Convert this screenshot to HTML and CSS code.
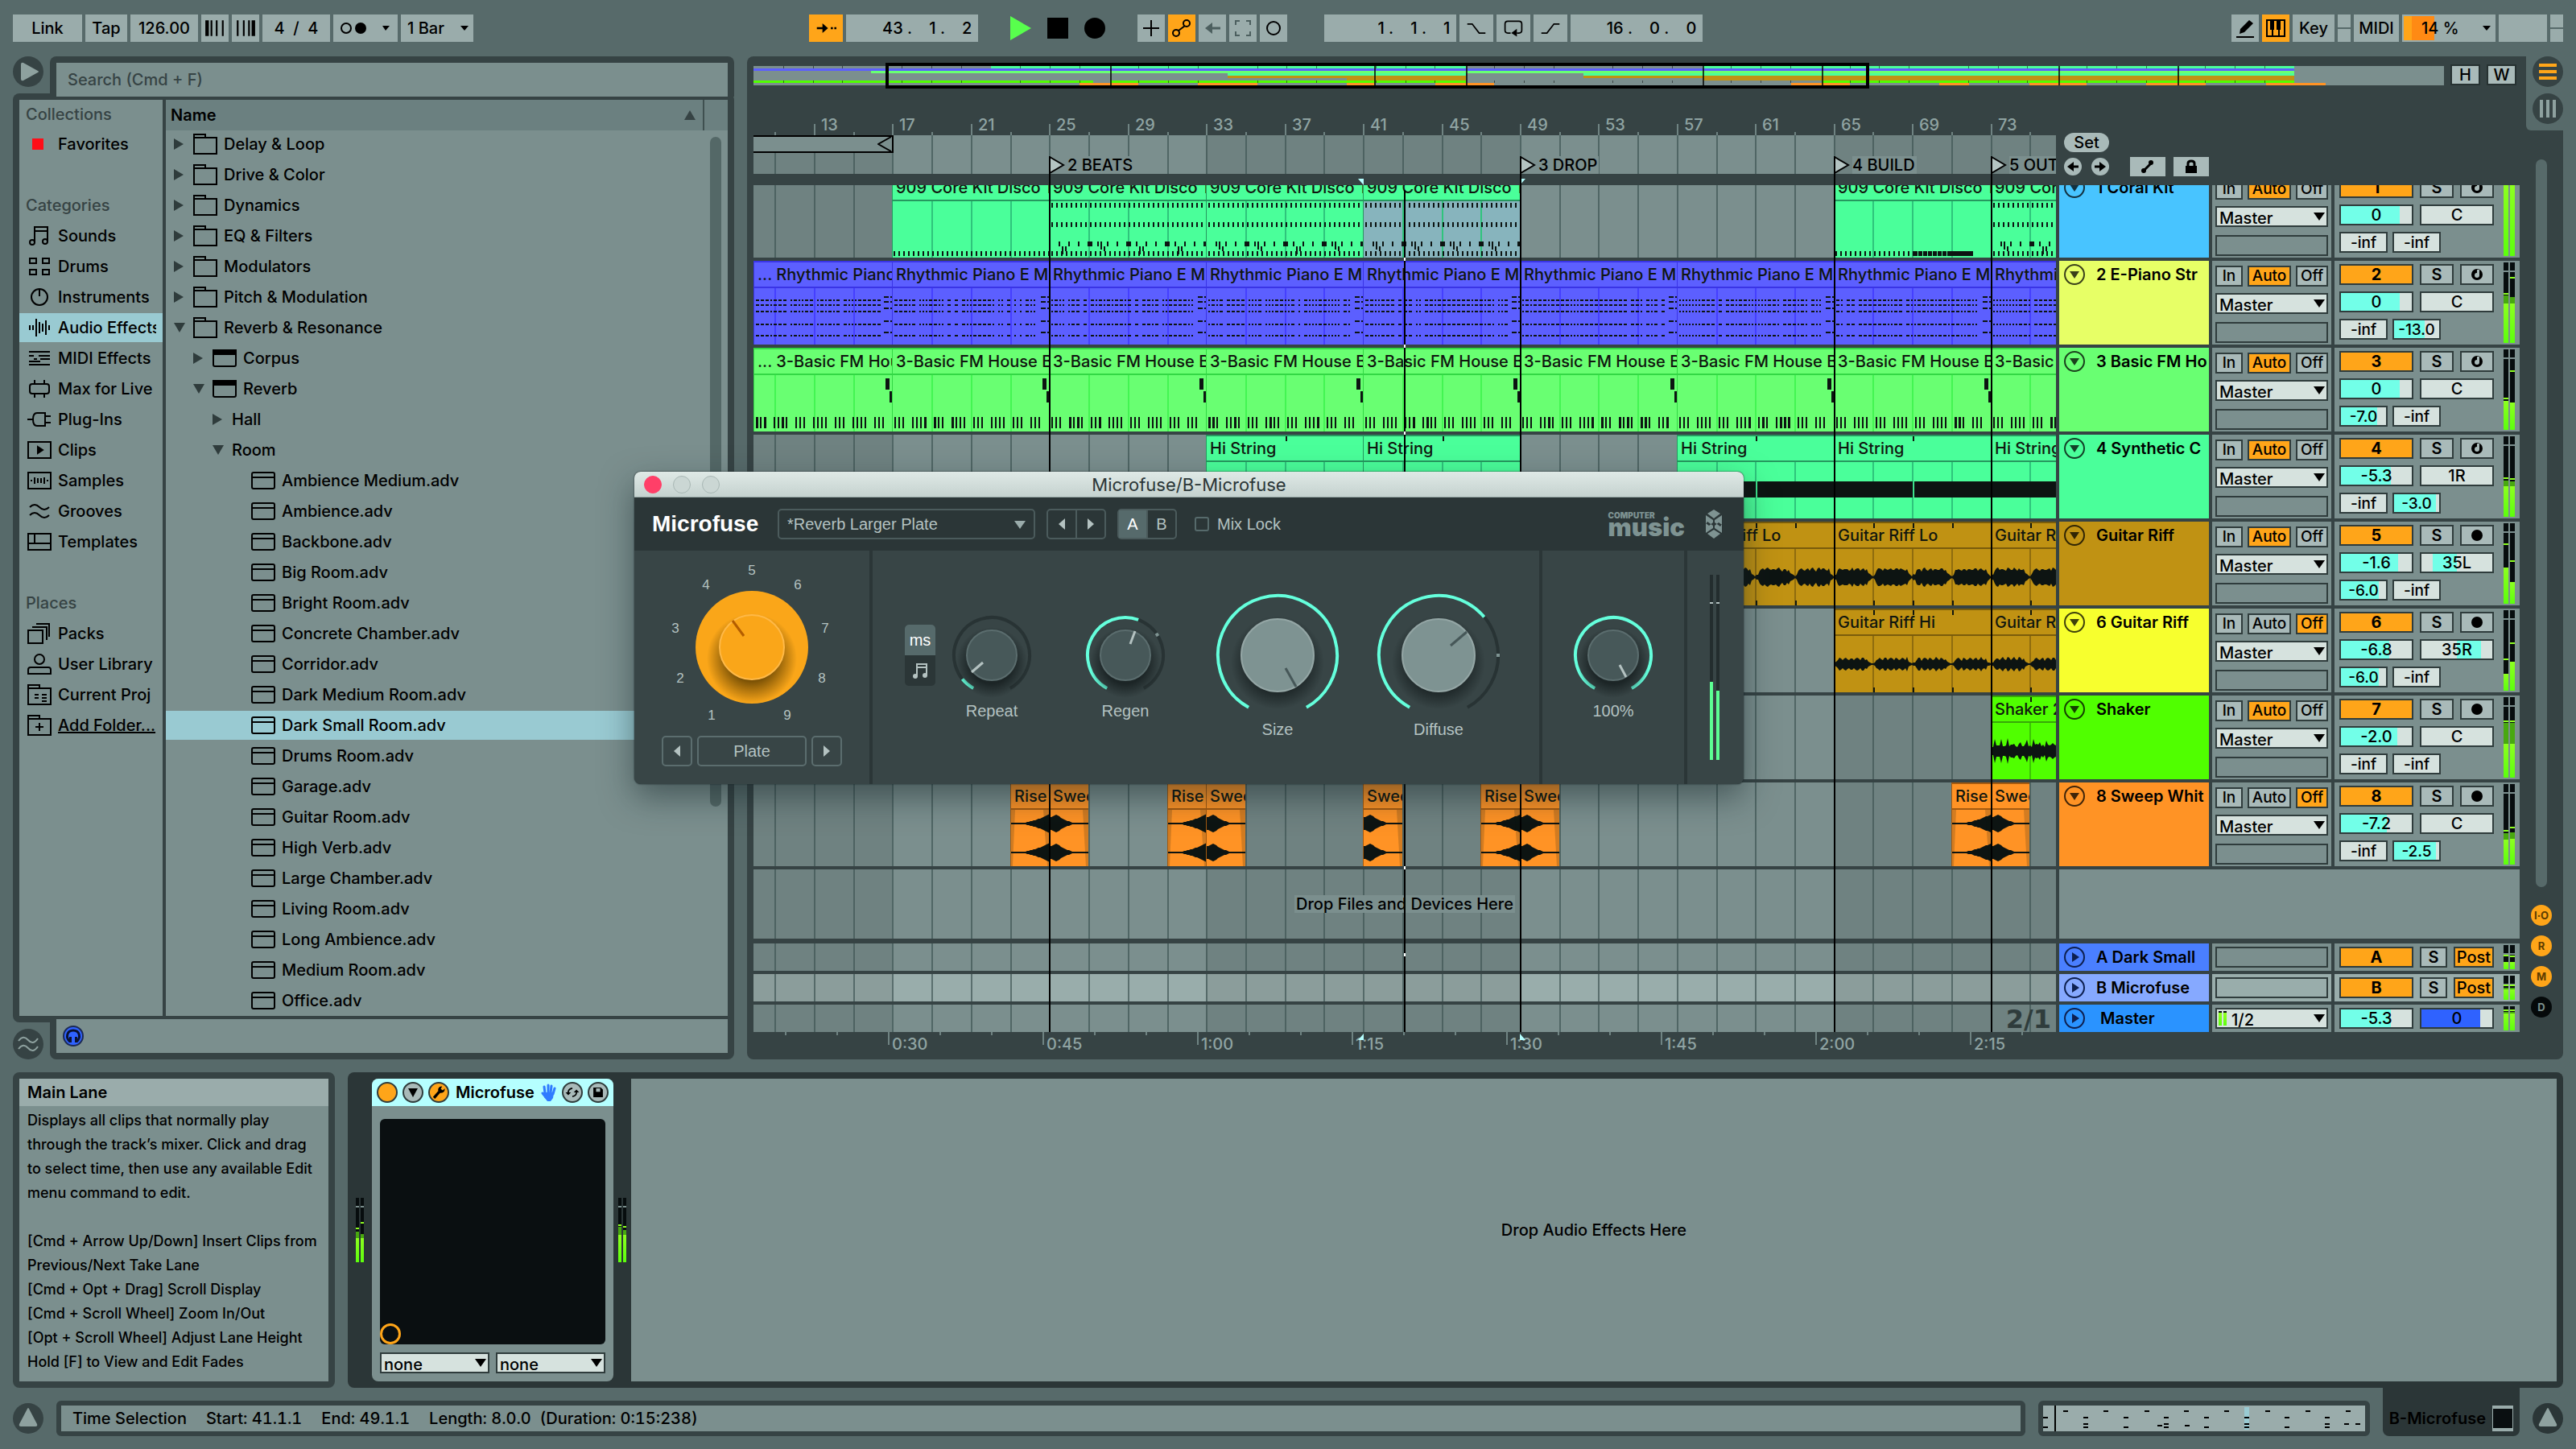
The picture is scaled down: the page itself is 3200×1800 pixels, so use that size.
FILE: index.html
```html
<!DOCTYPE html>
<html lang="en">
<head>
    <meta charset="UTF-8">
    <meta name="viewport" content="width=device-width, initial-scale=1.0">
    <title>Arrangement</title>
    <link rel="stylesheet" href="styles.css">
</head>
<body>
    <!-- shared icons -->
    <svg class="defs" aria-hidden="true">
        <symbol id="i-folder" viewBox="0 0 30 28"><path d="M1 26V2h14v4M1 6h28v20H1z"/></symbol>
        <symbol id="i-device" viewBox="0 0 30 28"><rect x="1" y="4" width="28" height="20" rx="2"/><path class="solid" d="M1 4h28v5H1z"/></symbol>
        <symbol id="i-preset" viewBox="0 0 30 28"><rect x="1" y="4" width="28" height="20" rx="2"/><path d="M1 10h28"/></symbol>
        <symbol id="i-sounds" viewBox="0 0 30 28"><path d="M9 22V3h16v18M9 8h16"/><circle cx="6" cy="22" r="3"/><circle cx="22" cy="21" r="3"/></symbol>
        <symbol id="i-drums" viewBox="0 0 30 28"><path d="M3 4h8v6H3zM19 4h8v6h-8zM3 18h8v6H3zM19 18h8v6h-8z"/></symbol>
        <symbol id="i-instruments" viewBox="0 0 30 28"><circle cx="15" cy="14" r="10"/><path d="M15 4v9"/></symbol>
        <symbol id="i-audio" viewBox="0 0 30 28"><path d="M3 11v6M7 11v6M11 3v22M15 7v14M19 9v10M23 5v18M27 11v6"/></symbol>
        <symbol id="i-midi" viewBox="0 0 30 28"><path d="M2 6h26M2 22h26M2 11h6M14 11h14M8 15h4M16 15h12M2 18h14"/></symbol>
        <symbol id="i-max" viewBox="0 0 30 28"><rect x="3" y="8" width="24" height="12" rx="3"/><path d="M9 3v5M21 3v5M9 20v5M21 20v5"/></symbol>
        <symbol id="i-plug" viewBox="0 0 30 28"><path d="M0 14h7M22 6H12q-5 0-5 8t5 8h10zM22 10h7M22 18h7"/></symbol>
        <symbol id="i-clips" viewBox="0 0 30 28"><rect x="1" y="4" width="28" height="20"/><path class="solid" d="M13 10l6 4-6 4z"/></symbol>
        <symbol id="i-samples" viewBox="0 0 30 28"><rect x="1" y="4" width="28" height="20"/><path d="M5 13v2M9 10v8M13 11v6M17 11v6M21 10v8M25 13v2"/></symbol>
        <symbol id="i-grooves" viewBox="0 0 30 28"><path d="M3 9q6-6 12 0t12 0M3 19q6-6 12 0t12 0"/></symbol>
        <symbol id="i-templates" viewBox="0 0 30 28"><path d="M1 4h28v20H1zM1 16h28M9 4v12"/></symbol>
        <symbol id="i-packs" viewBox="0 0 30 28"><path d="M1 10h18v16H1zM6 6h18v16M11 2h16v16"/></symbol>
        <symbol id="i-user" viewBox="0 0 30 28"><circle cx="15" cy="8" r="6"/><path d="M1 26v-5q0-3 3-3h22q3 0 3 3v5z"/></symbol>
        <symbol id="i-project" viewBox="0 0 30 28"><path d="M1 26V2h14v4M1 6h28v20H1zM9 14h5M18 14h6M9 18h5M18 18h6M18 22h6"/></symbol>
        <symbol id="i-add" viewBox="0 0 30 28"><path d="M1 26V2h14v4M1 6h28v20H1zM15 11v10M10 16h10"/></symbol>
    </svg>

    <header class="toolbar">
        <div class="tools tools-left">
            <button class="tool w86">Link</button>
            <button class="tool w52">Tap</button>
            <input class="tool w84" aria-label="Tempo" value="126.00">
            <button class="tool w34" aria-label="Nudge down"><svg viewBox="0 0 24 20"><path d="M2 1v18M4 1v18M8 1v18M14 1v18M21 1v18"/></svg></button>
            <button class="tool w34" aria-label="Nudge up"><svg viewBox="0 0 24 20"><path d="M3 1v18M10 1v18M16 1v18M20 1v18M22 1v18"/></svg></button>
            <input class="tool w84" aria-label="Time signature" value="4  /  4">
            <button class="tool w80" aria-label="Metronome"><svg class="metro" viewBox="0 0 64 20"><circle cx="8" cy="10" r="6"/><circle class="fill" cx="26" cy="10" r="7"/><path class="fill" d="M53 7h9l-5 6z"/></svg></button>
            <span class="pick plain w90"><select class="tool" aria-label="Quantization"><option>1 Bar</option></select></span>
        </div>
        <div class="tools">
            <button class="tool on w42" aria-label="Follow"><svg viewBox="0 0 30 20"><path d="M2 10h10M22 10h3M27 10h3" stroke-width="3"/><path class="fill" d="M10 3l8 7-8 7z"/></svg></button>
            <input class="tool pos w164" aria-label="Position" value="43 .    1 .    2">
            <div class="transport">
                <button class="bare" aria-label="Play"><svg width="26" height="30"><path fill="#58ff4d" d="M0 0l26 15L0 30z"/></svg></button>
                <button class="bare" aria-label="Stop"><svg width="26" height="26"><path d="M0 0h26v26H0z"/></svg></button>
                <button class="bare" aria-label="Record"><svg width="26" height="26"><circle cx="13" cy="13" r="13"/></svg></button>
            </div>
            <button class="tool w34" aria-label="Overdub"><svg viewBox="0 0 24 24"><path d="M12 2v20M2 12h20"/></svg></button>
            <button class="tool on w34" aria-label="Automation arm"><svg viewBox="0 0 24 24"><circle cx="5" cy="18" r="4"/><circle cx="18" cy="6" r="4"/><path d="M8 15l8-6"/></svg></button>
            <button class="tool dim w34" aria-label="Re-enable automation"><svg viewBox="0 0 24 24"><path d="M10 12h12" stroke-width="3"/><path class="fill" d="M12 5v14l-9-7z"/></svg></button>
            <button class="tool dim w34" aria-label="Capture"><svg viewBox="0 0 24 24"><path d="M3 8V3h5M16 3h5v5M21 16v5h-5M8 21H3v-5"/></svg></button>
            <button class="tool w34" aria-label="Session record"><svg viewBox="0 0 24 24"><circle cx="12" cy="12" r="8"/></svg></button>
            <input class="tool pos w164 loop-start" aria-label="Loop start" value="1 .    1 .    1">
            <button class="tool w42" aria-label="Punch in"><svg viewBox="0 0 30 20"><path d="M2 4h7l10 13h9"/></svg></button>
            <button class="tool w42" aria-label="Loop"><svg viewBox="0 0 30 24"><path d="M11 19H7q-4 0-4-4V6q0-4 4-4h16q4 0 4 4v9q0 4-4 4h-3"/><path class="fill" d="M20 13v11l-8-5z"/></svg></button>
            <button class="tool w42" aria-label="Punch out"><svg viewBox="0 0 30 20"><path d="M2 17h8L20 4h8"/></svg></button>
            <input class="tool pos w164" aria-label="Loop length" value="16 .    0 .    0">
        </div>
        <div class="tools tools-right">
            <button class="tool w34" aria-label="Draw mode"><svg viewBox="0 0 24 24"><path d="M1 23h22"/><path class="fill" d="M5 19l1-6L17 2l5 4-11 11z"/></svg></button>
            <button class="tool on w34" aria-label="Computer keyboard"><svg viewBox="0 0 24 24"><path d="M1 2h22v20H1zM8 14v8M16 14v8"/><path class="fill" d="M5 2h5v12H5zM13 2h5v12h-5z"/></svg></button>
            <button class="tool w52">Key</button>
            <div class="split"><i></i><i></i></div>
            <button class="tool w56">MIDI</button>
            <span class="pick plain w116"><select class="tool cpu" aria-label="CPU load"><option>14 %</option></select></span>
            <div class="tool w60"></div>
            <div class="split"><i></i><i></i></div>
        </div>
    </header>

    <main class="workspace">
        <section class="browser">
            <button class="round" aria-label="Hide browser"><svg viewBox="0 0 38 38"><path d="M10 10q0-3 3-2l18 10q2 1 0 2L13 30q-3 1-3-2z"/></svg></button>
            <div class="browser-search"><input type="search" aria-label="Search" placeholder="Search (Cmd + F)"></div>
            <div class="browser-body">
                <nav class="places">
                    <h2>Collections</h2>
                    <a href="#"><span class="fav"></span>Favorites</a>
                    <h2 class="spaced">Categories</h2>
                    <a href="#"><svg><use href="#i-sounds"/></svg>Sounds</a>
                    <a href="#"><svg><use href="#i-drums"/></svg>Drums</a>
                    <a href="#"><svg><use href="#i-instruments"/></svg>Instruments</a>
                    <a href="#" class="current"><svg><use href="#i-audio"/></svg><span>Audio Effects</span></a>
                    <a href="#"><svg><use href="#i-midi"/></svg>MIDI Effects</a>
                    <a href="#"><svg><use href="#i-max"/></svg>Max for Live</a>
                    <a href="#"><svg><use href="#i-plug"/></svg>Plug-Ins</a>
                    <a href="#"><svg><use href="#i-clips"/></svg>Clips</a>
                    <a href="#"><svg><use href="#i-samples"/></svg>Samples</a>
                    <a href="#"><svg><use href="#i-grooves"/></svg>Grooves</a>
                    <a href="#"><svg><use href="#i-templates"/></svg>Templates</a>
                    <h2 class="spaced">Places</h2>
                    <a href="#"><svg><use href="#i-packs"/></svg>Packs</a>
                    <a href="#"><svg><use href="#i-user"/></svg>User Library</a>
                    <a href="#"><svg><use href="#i-project"/></svg>Current Proj</a>
                    <a href="#" class="add"><svg><use href="#i-add"/></svg><u>Add Folder...</u></a>
                </nav>
                <div class="files">
                    <div class="files-head"><span>Name</span><i class="sort"></i></div>
                    <ul id="files"></ul>
                    <div class="files-scroll"></div>
                </div>
            </div>
            <button class="round groove" aria-label="Groove pool"><svg viewBox="0 0 38 38"><path class="line" d="M7 15q6-8 12-1t12-2M7 25q6-8 12-1t12-2"/></svg></button>
            <div class="browser-foot">
                <div><button aria-label="Preview"><svg width="26" height="26" viewBox="0 0 26 26"><circle cx="13" cy="13" r="12" fill="#2f62ff" stroke="#1c2a55" stroke-width="2"/><path fill="none" stroke="#0a1230" stroke-width="3" d="M9 20c-6-5-4-14 4-14s10 9 4 14"/><path d="M8 14h3v7H8zM15 14h3v7h-3z" fill="#0a1230"/></svg></button></div>
            </div>
        </section>

        <section class="arrange">
            <div class="overview-row">
                <div class="overview" id="overview"></div>
                <button class="hw">H</button>
                <button class="hw">W</button>
            </div>
            <div class="arrange-main">
                <div class="arrange-left">
                    <div class="head">
                        <div class="ruler" id="ruler"></div>
                        <div class="set-tools">
                            <button class="set">Set</button>
                            <div class="set-row">
                                <button class="dot" aria-label="Previous locator"><svg viewBox="0 0 22 22"><path d="M10 11h8" class="line"/><path d="M12 5v12l-8-6z"/></svg></button>
                                <button class="dot" aria-label="Next locator"><svg viewBox="0 0 22 22"><path d="M4 11h8" class="line"/><path d="M10 5v12l8-6z"/></svg></button>
                                <button class="sq" aria-label="Automation mode"><svg viewBox="0 0 44 24"><path class="line" d="M17 17l10-10"/><circle cx="17" cy="17" r="3"/><circle cx="26" cy="7" r="3"/></svg></button>
                                <button class="sq" aria-label="Lock envelopes"><svg viewBox="0 0 44 24"><path d="M15 11h14v9H15z"/><path class="line" d="M18 12V8q0-3 4-3t4 3v4"/></svg></button>
                            </div>
                        </div>
                    </div>
                    <div class="tracks" id="tracks"></div>
                    <div class="time-ruler" id="time-ruler"></div>
                    <div class="cursors" id="cursors"></div>
                </div>
                <aside class="arrange-side">
                    <div class="v-scroll"></div>
                    <button class="chip">I·O</button>
                    <button class="chip">R</button>
                    <button class="chip">M</button>
                    <button class="chip off">D</button>
                </aside>
            </div>
            <div class="notch">
                <button class="round lit" aria-label="Arrangement view"><svg viewBox="0 0 38 38"><path d="M8 9h22v4H8zM8 17h22v4H8zM8 25h22v4H8z"/></svg></button>
                <button class="round" aria-label="Session view"><svg viewBox="0 0 38 38"><path d="M9 8h4v22H9zM17 8h4v22h-4zM25 8h4v22h-4z"/></svg></button>
            </div>
        </section>
    </main>

    <section class="detail">
        <aside class="info">
            <h2>Main Lane</h2>
            <p>Displays all clips that normally play<br>through the track’s mixer. Click and drag<br>to select time, then use any available Edit<br>menu command to edit.</p>
            <p>[Cmd + Arrow Up/Down] Insert Clips from<br>Previous/Next Take Lane<br>[Cmd + Opt + Drag] Scroll Display<br>[Cmd + Scroll Wheel] Zoom In/Out<br>[Opt + Scroll Wheel] Adjust Lane Height<br>Hold [F] to View and Edit Fades</p>
        </aside>
        <div class="chain">
            <div class="meter small" data-levels="37,48,51;38,44,60"></div>
            <article class="device">
                <header>
                    <button class="dev-btn on" aria-label="Device activator"></button>
                    <button class="dev-btn" aria-label="Unfold"><svg viewBox="0 0 26 26"><path d="M6 7h14l-7 13z"/></svg></button>
                    <button class="dev-btn on" aria-label="Show plug-in window"><svg viewBox="0 0 26 26"><path d="M6 21l8-9" stroke="#000" stroke-width="4"/><path d="M12 10q0-6 6-6l-2 4 3 2 3-3q0 7-7 7z"/></svg></button>
                    <h3>Microfuse</h3>
                    <svg class="hand" viewBox="0 0 20 22"><path fill="none" stroke="#2f7bff" stroke-width="3" stroke-linecap="round" d="M5 12L4 4M9 12V2M12 12l1-9M15 13l2-7M6 17l-4-5"/><path fill="#2f7bff" d="M4 11h12l-1 7-3 4H8l-4-5z"/></svg>
                    <button class="dev-btn" aria-label="Hot swap"><svg viewBox="0 0 26 26"><path fill="none" stroke="#000" stroke-width="2" d="M7 15q-1-7 6-8M19 11q1 7-6 8"/><path d="M3 13h8l-4 4zM15 13h8l-4-4z"/></svg></button>
                    <button class="dev-btn" aria-label="Save preset"><svg viewBox="0 0 26 26"><path d="M6 6h11l3 3v11H6z"/><path fill="#a9bab9" d="M10 7h6v5h-6z"/></svg></button>
                </header>
                <div class="pad"><span></span></div>
                <div class="pad-selects">
                    <span class="pick"><select aria-label="X parameter"><option>none</option></select></span>
                    <span class="pick"><select aria-label="Y parameter"><option>none</option></select></span>
                </div>
            </article>
            <div class="meter small" data-levels="42,55,56;42,50,54"></div>
            <div class="drop-fx">Drop Audio Effects Here</div>
        </div>
    </section>

    <footer class="status">
        <button class="round" aria-label="Hide info"><svg viewBox="0 0 38 38"><path d="M18 7q1-2 2 0l10 19q1 3-2 3H10q-3 0-2-3z"/></svg></button>
        <div class="status-text"><span>Time Selection</span><span>Start: 41.1.1</span><span>End: 49.1.1</span><span>Length: 8.0.0&nbsp; (Duration: 0:15:238)</span></div>
        <div class="clip-map"><svg id="clip-map" width="400" height="32"></svg></div>
        <div class="tab">B-Microfuse<span class="mini"></span></div>
        <button class="round dark" aria-label="Hide device view"><svg viewBox="0 0 38 38"><path d="M18 7q1-2 2 0l10 19q1 3-2 3H10q-3 0-2-3z"/></svg></button>
    </footer>

    <!-- floating plug-in window -->
    <div class="plugin" role="dialog" aria-label="Microfuse">
        <div class="plugin-title">
            <button class="light close" aria-label="Close"></button><button class="light" aria-label="Minimize"></button><button class="light" aria-label="Zoom"></button>
            <span>Microfuse/B-Microfuse</span>
        </div>
        <div class="plugin-head">
            <h2>Microfuse</h2>
            <span class="pick preset"><select aria-label="Preset"><option>*Reverb Larger Plate</option></select></span>
            <div class="pair"><button aria-label="Previous preset"><i class="left"></i></button><button aria-label="Next preset"><i class="right"></i></button></div>
            <div class="pair"><button class="on">A</button><button>B</button></div>
            <label class="lock"><input type="checkbox">Mix Lock</label>
            <div class="brand"><small>COMPUTER</small><b>music</b></div>
            <svg class="hex" viewBox="0 0 20 36"><path d="M10 0l8 5-8 6-8-6zM0 7l9 6v3l-5 4-4-3zM20 7l-9 6v3l7 5 2-3zM0 29l9-6v-3l-7-5-2 3zM20 29l-9-6v-3l5-4 4 3zM10 25l8 5-8 6-8-6z"/></svg>
        </div>
        <div class="plugin-body">
            <div class="algo">
                <label class="dial">
                    <input type="range" min="1" max="9" value="4" aria-label="Algorithm">
                    <svg viewBox="0 0 292 230">
                        <defs>
                            <radialGradient id="dial-shade"><stop offset=".5" stop-color="#5a3c00" stop-opacity=".8"/><stop offset="1" stop-color="#5a3c00" stop-opacity="0"/></radialGradient>
                        </defs>
                        <circle cx="146" cy="120" r="70" fill="#faa619"/>
                        <circle cx="146" cy="134" r="56" fill="url(#dial-shade)"/>
                        <circle cx="146" cy="120" r="40" fill="#faa619" stroke="#ffb947" stroke-width="2"/>
                        <path d="M136 106l-14-19" stroke="#b35d00" stroke-width="3"/>
                        <g class="nums">
                            <text x="96" y="210">1</text><text x="57" y="164">2</text><text x="51" y="102">3</text>
                            <text x="89" y="48">4</text><text x="146" y="30">5</text><text x="203" y="48">6</text>
                            <text x="237" y="102">7</text><text x="233" y="164">8</text><text x="190" y="210">9</text>
                        </g>
                    </svg>
                </label>
                <div class="algo-nav">
                    <button aria-label="Previous algorithm"><i class="left"></i></button>
                    <button class="wide">Plate</button>
                    <button aria-label="Next algorithm"><i class="right"></i></button>
                </div>
            </div>
            <div class="knobs">
                <div class="sync"><button class="on">ms</button><button aria-label="Note sync"><svg width="24" height="24" viewBox="0 0 24 24"><path fill="none" stroke="#b4c2c1" stroke-width="2" d="M8 19V4h12v14M8 8h12"/><circle cx="6" cy="19" r="3"/><circle cx="18" cy="18" r="3"/></svg></button></div>
                <div class="knob" data-name="Repeat" data-arc="22" data-hand="-11,9,-25,21"></div>
                <div class="knob" data-name="Regen" data-arc="171" data-hand="6,-14,12,-30" data-mark="57"></div>
                <div class="large-knobs">
                    <div class="knob large" data-name="Size" data-arc="302" data-hand="10,16,23,39"></div>
                    <div class="knob large" data-name="Diffuse" data-arc="201" data-hand="15,-12,35,-29" data-mark="90"></div>
                </div>
            </div>
            <div class="mix"><div class="knob" data-name="100%" data-arc="302" data-hand="8,12,16,27"></div></div>
            <div class="out"><i class="out-l"></i><i class="out-r"></i></div>
        </div>
    </div>

    <script src="script.js"></script>
</body>
</html>
```
FILE: styles.css
```css
* {
    box-sizing: border-box;
}

body {
    margin: 0;
    padding: 18px 16px 16px;
    background: #576a6a;
    color: #000;
    font: 500 20px/26px Inter, "Noto Sans", sans-serif;
    position: relative;
    overflow-x: hidden;
}

button, input, select {
    font: inherit;
    color: inherit;
    margin: 0;
    padding: 0;
    border: 0;
    border-radius: 0;
    background: none;
    appearance: none;
    min-width: 0;
}

h2, h3, p, ul {
    margin: 0;
    padding: 0;
    font: inherit;
    list-style: none;
}

a {
    color: inherit;
    text-decoration: none;
}

svg {
    display: block;
}

.defs {
    position: absolute;
    width: 0;
    height: 0;
}

/* top bar */
.toolbar {
    display: flex;
    height: 34px;
}

.tools {
    display: flex;
    gap: 4px;
}

.tools-left {
    flex: 25 1 0;
}

.tools-right {
    flex: 27 1 0;
    justify-content: flex-end;
}

.tool {
    height: 34px;
    background: #9aacab;
    text-align: center;
    white-space: pre;
}

.tool svg {
    width: 26px;
    height: 24px;
    margin: 0 auto;
    fill: none;
    stroke: #000;
    stroke-width: 2;
}

.tool .fill {
    fill: #000;
    stroke: none;
}

.tool .metro {
    width: 64px;
}

.tool.on {
    background: #ffa519;
}

.tool.dim svg {
    stroke: #4c5f5f;
}

.tool.dim .fill {
    fill: #4c5f5f;
}

.tool.pos {
    text-align: right;
    padding-right: 8px;
}

.w34 { width: 34px; }
.w42 { width: 42px; }
.w52 { width: 52px; }
.w56 { width: 56px; }
.w60 { width: 60px; }
.w80 { width: 80px; }
.w84 { width: 84px; }
.w86 { width: 86px; }
.w90 { width: 90px; }
.w116 { width: 116px; }
.w164 { width: 164px; }

.loop-start {
    margin-left: 42px;
}

.transport {
    display: flex;
    align-items: center;
    gap: 20px;
    margin: 0 36px;
}

.split {
    display: flex;
    flex-direction: column;
    gap: 2px;
    width: 16px;
}

.split i {
    flex: 1;
    background: #9aacab;
}

.pick {
    position: relative;
    display: block;
}

.pick select {
    width: 100%;
    height: 26px;
    padding-left: 3px;
    background: #d6e2de;
    border: 2px solid #2f3c3c;
    text-align: left;
}

.pick::after {
    content: "";
    position: absolute;
    right: 4px;
    top: 8px;
    width: 14px;
    height: 10px;
    background: #000;
    clip-path: polygon(0 0, 100% 0, 50% 100%);
    pointer-events: none;
}

.pick.plain select {
    height: 34px;
    padding-left: 8px;
    border: 0;
    background: #9aacab;
}

.pick.plain::after {
    right: 6px;
    top: 14px;
    width: 10px;
    height: 6px;
}

.pick.plain .cpu {
    padding-left: 22px;
    border: 2px solid #9aacab;
    background: linear-gradient(90deg, #ffa519 10px, #ff8a14 10px 38px, #9aacab 38px);
}

.round {
    width: 38px;
    height: 38px;
    border-radius: 50%;
    background: #364344;
    flex: none;
}

.round.dark {
    background: #2b3637;
}

.round path {
    fill: #8ea19f;
}

.round.lit path {
    fill: #ffa519;
}

.round .line {
    fill: none;
    stroke: #8ea19f;
    stroke-width: 2;
}

/* browser */
.workspace {
    display: flex;
    gap: 16px;
    margin-top: 18px;
}

.browser {
    position: relative;
    flex: 0 0 896px;
}

.browser > .round {
    position: absolute;
    left: 0;
    top: 0;
}

.browser > .groove {
    top: auto;
    bottom: 0;
}

.browser-search {
    position: relative;
    margin: 0 0 -4px 46px;
    padding: 8px 8px 0;
    background: #364344;
    border-radius: 8px 8px 0 0;
}

.browser-search input {
    width: 100%;
    height: 42px;
    padding-left: 14px;
    background: #7b8f8e;
}

.browser-search input::placeholder {
    color: #364344;
    opacity: 1;
}

.browser-body {
    display: flex;
    gap: 4px;
    padding: 8px;
    background: #364344;
    border-radius: 8px;
}

.places {
    width: 178px;
    flex: none;
    background: #7b8f8e;
}

.places h2 {
    height: 36px;
    padding: 5px 8px;
    color: #364344;
}

.places .spaced {
    height: 76px;
    padding-top: 44px;
}

.places a {
    display: flex;
    align-items: center;
    gap: 8px;
    height: 38px;
    padding-left: 10px;
    margin-right: 8px;
    white-space: nowrap;
    overflow: hidden;
}

.places .current {
    height: 36px;
    margin: 1px 0;
    padding-right: 8px;
    background: #99cad2;
}

.current span {
    overflow: hidden;
}

.places svg, .files svg {
    width: 30px;
    height: 28px;
    flex: none;
    fill: none;
    stroke: #000;
    stroke-width: 2;
}

.solid {
    fill: #000;
}

.fav {
    width: 14px;
    height: 14px;
    margin: 0 10px 0 6px;
    background: #ff0d17;
}

.files {
    position: relative;
    flex: 1;
    background: #7b8f8e;
    height: 1138px;
    overflow: hidden;
}

.files-head {
    display: flex;
    align-items: center;
    justify-content: space-between;
    height: 38px;
    margin-bottom: -2px;
    padding: 0 40px 0 6px;
    background: linear-gradient(90deg, transparent calc(100% - 31px), #3f5050 calc(100% - 31px) calc(100% - 29px), transparent calc(100% - 29px)) #6b8080;
    font-weight: 600;
}

.sort {
    width: 14px;
    height: 12px;
    background: #364344;
    clip-path: polygon(50% 0, 100% 100%, 0 100%);
}

.files li {
    display: flex;
    align-items: center;
    height: 38px;
    padding-left: 10px;
    white-space: nowrap;
}

.files li.sel {
    background: linear-gradient(#99cad2, #99cad2) 0 1px / 100% 36px no-repeat;
}

.files li.l1 { padding-left: 34px; }
.files li.l2 { padding-left: 58px; }
.files li.l3 { padding-left: 82px; }

.files .tw {
    width: 24px;
    flex: none;
}

.files .tw::before {
    content: "";
    display: block;
    width: 12px;
    height: 14px;
    background: #2f3c3c;
    clip-path: polygon(0 0, 100% 50%, 0 100%);
}

.files .open::before {
    width: 14px;
    height: 12px;
    clip-path: polygon(0 0, 100% 0, 50% 100%);
}

.files .none::before {
    display: none;
}

.files svg {
    margin-right: 8px;
}

.files-scroll {
    position: absolute;
    right: 8px;
    top: 46px;
    width: 14px;
    height: 832px;
    border-radius: 7px;
    background: #546867;
}

.browser-foot {
    position: relative;
    margin: -8px 0 0 46px;
    padding: 4px 8px 8px;
    background: #364344;
    border-radius: 0 0 8px 8px;
}

.browser-foot div {
    height: 42px;
    padding: 8px;
    background: #7b8f8e;
}

/* arrangement */
.arrange {
    position: relative;
    flex: 1;
    min-width: 0;
    padding-top: 10px;
    background: #364344;
    border-radius: 8px;
}

.overview-row {
    display: flex;
    align-items: flex-end;
    gap: 8px;
    height: 26px;
    padding: 0 58px 0 8px;
}

.overview {
    position: relative;
    flex: 1;
    height: 24px;
    background: #7b8f8e;
}

.overview svg {
    width: 100%;
    height: 24px;
}

.overview-box {
    position: absolute;
    top: -4px;
    bottom: -4px;
    left: 164px;
    width: 1222px;
    border: 4px solid #000;
}

.hw {
    width: 37px;
    height: 26px;
    background: #a9bab9;
    border: 2px solid #273232;
    line-height: 22px;
}

.arrange-main {
    display: flex;
}

.arrange-left {
    position: relative;
    flex: 1;
    min-width: 0;
    padding-left: 8px;
}

.arrange-side {
    width: 54px;
    display: flex;
    flex-direction: column;
    align-items: center;
    gap: 12px;
    padding: 92px 0 52px;
}

.v-scroll {
    flex: 1;
    width: 14px;
    margin-bottom: 10px;
    border-radius: 7px;
    background: #576a6a;
}

.chip {
    width: 26px;
    height: 26px;
    border-radius: 50%;
    background: #ffa519;
    color: #5d3c00;
    font: 700 13px/26px Inter, sans-serif;
}

.chip.off {
    background: #05090a;
    color: #7b8f8e;
}

.notch {
    position: absolute;
    right: 0;
    top: 0;
    width: 46px;
    height: 92px;
    display: flex;
    flex-direction: column;
    gap: 8px;
    align-items: flex-end;
    background: #576a6a;
    border-bottom-left-radius: 6px;
}

.head {
    display: grid;
    grid-template-columns: 1fr 572px;
    gap: 4px;
    height: 124px;
}

.ruler {
    position: relative;
    overflow: hidden;
}

.ruler .lane-bg {
    top: 62px;
    height: 48px;
    background: #7b8f8e;
}

.ruler .num {
    position: absolute;
    top: 36px;
    color: #8fa3a2;
    padding-left: 9px;
}

.ruler .tick {
    position: absolute;
    top: 58px;
    width: 2px;
    height: 4px;
    background: #6f8382;
}

.ruler .tick.long {
    top: 48px;
    height: 14px;
}

.loop-brace {
    position: absolute;
    top: 62px;
    left: 0;
    width: 174px;
    height: 22px;
    border: solid #000;
    border-width: 2px 2px 2px 0;
    background: #7b8f8e;
}

.loop-brace svg {
    margin-left: auto;
}

.locator {
    position: absolute;
    top: 88px;
    display: flex;
    gap: 3px;
    height: 22px;
    line-height: 22px;
    white-space: nowrap;
}

.locator span {
    padding-right: 2px;
    background: #7b8f8e;
}

.sel-mark {
    position: absolute;
    top: 116px;
    width: 7px;
    height: 8px;
    background: #b5ffff;
    clip-path: polygon(0 0, 100% 0, 100% 100%);
}

.sel-mark.end {
    clip-path: polygon(0 0, 100% 0, 0 100%);
}

.set-tools {
    padding: 59px 0 0 6px;
}

.set {
    display: block;
    width: 56px;
    height: 24px;
    border-radius: 12px;
    background: #a9bab9;
    line-height: 24px;
}

.set-row {
    display: flex;
    align-items: center;
    gap: 12px;
    margin-top: 6px;
}

.dot {
    width: 22px;
    height: 22px;
    border-radius: 50%;
    background: #a9bab9;
}

.sq {
    width: 44px;
    height: 24px;
    background: #a9bab9;
}

.dot + .sq {
    margin-left: 14px;
}

.sq + .sq {
    margin-left: -2px;
}

.set-row .line {
    fill: none;
    stroke: #000;
    stroke-width: 3;
}

/* track rows */
.tracks {
    display: flex;
    flex-direction: column;
    gap: 4px;
    overflow: hidden;
}

.track {
    display: grid;
    grid-template-columns: minmax(0, 1fr) 186px 148px 230px;
    gap: 4px;
    height: 104px;
}

.track:first-child {
    margin-top: -14px;
}

.track.drop {
    height: 86px;
    grid-template-columns: minmax(0, 1fr) 572px;
    margin-bottom: 2px;
}

.track.short {
    height: 34px;
}

.lane, .panel {
    position: relative;
    background: #7b8f8e;
    overflow: hidden;
}

.short.lit .lane, .short.lit .panel {
    background: #99adab;
}

.lane-bg {
    position: absolute;
    left: 0;
    top: 0;
    width: 100%;
    height: 100%;
}

.drop .lane {
    display: flex;
    align-items: center;
    justify-content: center;
}

.drop .lane span {
    position: relative;
    padding: 0 2px;
    line-height: 22px;
    background: #7b8f8e;
}

.grid-label {
    position: absolute;
    right: 6px;
    top: 2px;
    color: #2f3c3c;
    font: 700 32px/32px "DejaVu Sans", sans-serif;
}

.clip {
    position: absolute;
    top: 0;
    height: 104px;
    background: var(--color);
    border-top: 2px solid var(--line);
    border-left: 1px solid var(--line);
    overflow: hidden;
}

.clip header {
    height: 32px;
    padding-left: 4px;
    border-bottom: 2px solid var(--line);
    line-height: 30px;
    white-space: nowrap;
    overflow: hidden;
    color: #10160f;
}

.clip .mark {
    position: absolute;
    top: 0;
    width: 2px;
    height: 6px;
    background: #10160f;
}

.clip .mark.low {
    top: auto;
    bottom: 0;
}

.clip.picked svg {
    background: #87b4bd;
}

.clip-name {
    display: flex;
    gap: 12px;
    padding: 4px 0 0 6px;
    font-weight: 600;
    background: var(--color);
    white-space: nowrap;
    overflow: hidden;
}

.clip-name svg {
    width: 28px;
    height: 28px;
    flex: none;
}

.io {
    padding: 6px 4px 0;
    display: grid;
    grid-template-columns: 34px 54px 40px;
    gap: 8px 6px;
    justify-content: space-between;
    align-content: start;
}

.io .pick, .io .empty {
    grid-column: 1 / -1;
}

.btn, .val {
    height: 26px;
    border: 2px solid #2f3c3c;
    background: #a9bab9;
    text-align: center;
    line-height: 22px;
    width: 100%;
}

.btn.on {
    background: #ffa519;
}

.btn svg {
    margin: 0 auto;
}

.empty {
    height: 26px;
    border: 2px solid #2f3c3c;
}

.val {
    background: linear-gradient(90deg, #d6e2de var(--from), #72ffe8 var(--from) var(--to), #d6e2de var(--to));
}

.val.blue {
    background: linear-gradient(90deg, #2f62ff var(--to), #d6e2de var(--to));
}

.mixer {
    display: flex;
    justify-content: space-between;
    padding: 4px 6px 2px;
}

.mixer-rows {
    display: flex;
    flex-direction: column;
    gap: 8px;
    width: 192px;
}

.mixer-row {
    display: flex;
    gap: 8px;
}

.mixer-row .num {
    width: 92px;
    font-weight: 700;
    flex: none;
}

.mixer-row .half {
    width: 92px;
}

.mixer-row .s {
    width: 42px;
    font-weight: 600;
}

.mixer-row .send {
    width: 60px;
    margin-right: -2px;
}

.mixer-row .send, .io .btn {
    font-size: 19px;
}

.short .mixer-row .s {
    width: 34px;
}

.short .post {
    width: 50px;
}

.meter {
    display: flex;
    gap: 2px;
    width: 14px;
    margin-top: -2px;
}

.meter i {
    flex: 1;
    background: linear-gradient(0deg, #5cff0c, #8dff20 var(--level), #48a80f var(--level) var(--hold), transparent var(--hold) var(--peak), #8dff20 var(--peak) calc(var(--peak) + 2px), transparent calc(var(--peak) + 2px)),
        linear-gradient(#070d0e 10px, #7b8f8e 10px 12px, #070d0e 12px);
}

.short .pick select {
    padding-left: 18px;
}

.short .io, .short .mixer {
    padding-top: 4px;
}

.short .pick .meter {
    position: absolute;
    left: 4px;
    top: 6px;
    width: 10px;
    height: 18px;
}

.time-ruler {
    position: relative;
    height: 34px;
    margin-right: 576px;
    color: #8fa3a2;
    overflow: hidden;
}

.time-ruler span {
    position: absolute;
    top: 2px;
    padding-left: 5px;
}

.time-ruler i {
    position: absolute;
    top: 0;
    width: 2px;
    height: 4px;
    background: #6f8382;
}

.time-ruler i.long {
    height: 16px;
}

.time-ruler .sel-mark {
    top: 2px;
    width: 7px;
    height: 8px;
    background: #b5ffff;
    clip-path: polygon(100% 0, 100% 100%, 0 100%);
}

.time-ruler .sel-mark.end {
    clip-path: polygon(0 0, 100% 100%, 0 100%);
}

.cursors {
    position: absolute;
    top: 88px;
    bottom: 34px;
    left: 8px;
    right: 576px;
    overflow: hidden;
    pointer-events: none;
}

.cursors i {
    position: absolute;
    top: 0;
    bottom: 0;
    width: 2px;
    background: #000;
}

.cursors .play {
    top: 42px;
    background: linear-gradient(#fff 4px, transparent 4px) 0 84px / 2px 108px, #000;
}

/* device view */
.detail {
    display: flex;
    gap: 16px;
    margin-top: 16px;
}

.info {
    width: 400px;
    flex: none;
    height: 392px;
    border: 8px solid #364344;
    border-radius: 8px;
    background: #7b8f8e;
    line-height: 30px;
    white-space: nowrap;
}

.info h2 {
    padding: 2px 10px;
    background: #9aacab;
    font-weight: 600;
}

.info p {
    padding: 3px 0 0 10px;
    font-size: 18px;
}

.info p + p {
    padding-top: 30px;
}

.chain {
    flex: 1;
    min-width: 0;
    display: flex;
    align-items: center;
    padding: 8px 8px 8px 10px;
    border-radius: 8px;
    background: #2b3637;
}

.meter.small {
    width: 10px;
    height: 80px;
    margin: 0;
}

.device {
    width: 300px;
    height: 376px;
    margin: 0 6px 0 10px;
    border-radius: 8px;
    background: #7b8f8e;
    overflow: hidden;
}

.device header {
    display: flex;
    align-items: center;
    gap: 6px;
    height: 34px;
    padding: 0 6px;
    background: #b5ffff;
}

.device h3 {
    flex: 1;
    margin-left: 2px;
    font-weight: 600;
}

.dev-btn {
    width: 26px;
    height: 26px;
    flex: none;
    border: 2px solid #2f3c3c;
    border-radius: 50%;
    background: #a9bab9;
}

.dev-btn.on {
    background: #ffa519;
}

.hand {
    width: 20px;
    height: 22px;
    flex: none;
}

.pad {
    display: flex;
    align-items: flex-end;
    height: 280px;
    margin: 16px 10px 10px;
    border-radius: 6px;
    background: #0a0f11;
}

.pad span {
    width: 26px;
    height: 26px;
    border: 3px solid #ffa519;
    border-radius: 50%;
}

.pad-selects {
    display: flex;
    gap: 8px;
    padding: 0 10px;
}

.pad-selects .pick {
    flex: 1;
}

.drop-fx {
    flex: 1;
    align-self: stretch;
    display: flex;
    align-items: center;
    justify-content: center;
    margin-left: 6px;
    background: #7b8f8e;
}

/* status bar */
.status {
    display: flex;
    align-items: center;
    gap: 16px;
    height: 44px;
    margin-top: 16px;
}

.status-text {
    flex: 1;
    display: flex;
    gap: 24px;
    height: 44px;
    padding: 3px 14px;
    border: 6px solid #364344;
    border-radius: 6px;
    background: #7b8f8e;
    font-variant-numeric: tabular-nums;
    white-space: nowrap;
}

.clip-map {
    height: 44px;
    border: 6px solid #364344;
    border-radius: 6px;
    background: #9aacab;
}

.tab {
    display: flex;
    align-items: center;
    gap: 8px;
    height: 60px;
    margin-top: -16px;
    padding: 16px 8px 0;
    border-radius: 0 0 8px 8px;
    background: #2b3637;
    font-weight: 600;
}

.mini {
    width: 26px;
    height: 32px;
    border: 1px solid #9aacab;
    border-width: 4px 1px;
    background: #0a0f11;
}

/* plug-in window */
.plugin {
    position: absolute;
    left: 788px;
    top: 586px;
    width: 1378px;
    border-radius: 8px;
    background: #384546;
    color: #b4c2c1;
    font: 20px/26px "Liberation Sans", Arial, sans-serif;
    box-shadow: 0 16px 40px rgba(20, 35, 40, .5), 0 0 2px #1c2526;
    overflow: hidden;
}

.plugin-title {
    display: flex;
    align-items: center;
    gap: 14px;
    height: 32px;
    padding: 0 12px;
    background: linear-gradient(#dfe9e6, #c5d2cf);
    border-bottom: 1px solid #97a7a5;
    color: #2b3637;
    font-family: Inter, sans-serif;
    font-size: 22px;
}

.plugin-title span {
    flex: 1;
    text-align: center;
    padding-right: 108px;
}

.light {
    width: 22px;
    height: 22px;
    border-radius: 50%;
    border: 1px solid #a8b7b4;
    background: #cbd7d4;
}

.light.close {
    border-color: #ff3f68;
    background: #ff3f68;
}

.plugin-head {
    display: flex;
    align-items: center;
    height: 66px;
    padding: 0 27px 0 22px;
    background: #2b3637;
}

.plugin-head h2 {
    width: 156px;
    color: #fff;
    font-size: 28px;
    font-weight: 700;
}

.preset {
    width: 320px;
}

.pick.preset select {
    height: 38px;
    padding-left: 10px;
    border: 2px solid #4b5b5c;
    border-radius: 5px;
    background: #2b3637;
}

.preset::after {
    right: 12px;
    top: 15px;
    background: #9aacab;
}

.pair {
    display: flex;
    width: 74px;
    height: 38px;
    margin-left: 14px;
    border: 2px solid #4b5b5c;
    border-radius: 5px;
}

.pair button {
    flex: 1;
}

.pair button + button {
    border-left: 2px solid #4b5b5c;
}

.pair .on, .sync .on {
    background: #566a6b;
    color: #fff;
}

.left, .right {
    display: block;
    width: 8px;
    height: 14px;
    margin: 0 auto;
    background: #b4c2c1;
    clip-path: polygon(100% 0, 100% 100%, 0 50%);
}

.right {
    clip-path: polygon(0 0, 100% 50%, 0 100%);
}

.lock {
    display: flex;
    align-items: center;
    gap: 10px;
    margin: 0 auto 0 22px;
}

.lock input {
    width: 18px;
    height: 18px;
    border: 2px solid #566a6b;
    border-radius: 3px;
}

.brand {
    margin-right: 26px;
    color: #7e9392;
    font-family: Inter, sans-serif;
}

.brand small {
    display: block;
    font-size: 10px;
    font-weight: 900;
    line-height: 8px;
}

.brand b {
    display: block;
    font-size: 31px;
    font-weight: 900;
    line-height: 22px;
}

.hex {
    width: 20px;
    height: 36px;
    fill: #7e9392;
}

.plugin-body {
    display: flex;
    height: 290px;
}

.algo {
    width: 296px;
    border-right: 4px solid #2b3637;
}

.dial, .knob label {
    position: relative;
    display: block;
}

.dial input, .knob input {
    position: absolute;
    left: 0;
    top: 0;
    width: 100%;
    height: 100%;
    opacity: 0;
}

.dial svg {
    width: 292px;
    height: 230px;
}

.nums {
    fill: #b4c2c1;
    font-size: 17px;
    text-anchor: middle;
}

.algo-nav {
    display: flex;
    justify-content: center;
    gap: 6px;
}

.algo-nav button {
    width: 38px;
    height: 38px;
    border: 2px solid #5b6d6e;
    border-radius: 5px;
}

.algo-nav .wide {
    width: 136px;
}

.knobs {
    flex: 1;
    display: flex;
    padding-left: 40px;
    border-right: 4px solid #2b3637;
}

.sync {
    width: 38px;
    height: 76px;
    margin: 92px 20px 0 0;
    border-radius: 5px;
    background: #2b3637;
    overflow: hidden;
}

.sync button {
    display: block;
    width: 38px;
    height: 38px;
}

.sync svg {
    margin: 0 auto;
    fill: #b4c2c1;
}

.knob {
    width: 100px;
    margin-top: 80px;
    text-align: center;
}

.knobs > .knob {
    margin-right: 66px;
}

.knob.large {
    width: 146px;
    margin-top: 57px;
}

.knob svg {
    overflow: visible;
    margin-bottom: 6px;
}

.large-knobs {
    display: flex;
    gap: 54px;
}

.mix {
    width: 180px;
    padding-left: 38px;
    border-right: 4px solid #2b3637;
}

.out {
    width: 70px;
    display: flex;
    gap: 4px;
    padding: 30px 0 30px 28px;
}

.out i {
    width: 4px;
    background: linear-gradient(#232d2e 34px, #b4c2c1 34px 36px, #232d2e 36px 133px, #5cff93 133px);
}

.out .out-r {
    background: linear-gradient(#232d2e 34px, #b4c2c1 34px 36px, #232d2e 36px 144px, #5cff93 144px);
}
```
FILE: script.js
```js
const BAR = 24.36;          // pixels per bar
const FIRST = 9.92;         // bar at the left edge
const x = bar => Math.max(0, Math.round((bar - FIRST) * BAR));
const rect = (x, y, w, h, extra = '') => `<rect x="${x}" y="${y}" width="${w}" height="${h}" ${extra}/>`;

let seed = 7;
const rnd = () => (seed = (seed * 16807) % 2147483647) / 2147483647;

// ---- browser list
const files = [
    [0, 'shut', 'folder', 'Delay & Loop'], [0, 'shut', 'folder', 'Drive & Color'],
    [0, 'shut', 'folder', 'Dynamics'], [0, 'shut', 'folder', 'EQ & Filters'],
    [0, 'shut', 'folder', 'Modulators'], [0, 'shut', 'folder', 'Pitch & Modulation'],
    [0, 'open', 'folder', 'Reverb & Resonance'], [1, 'shut', 'device', 'Corpus'],
    [1, 'open', 'device', 'Reverb'], [2, 'shut', '', 'Hall'], [2, 'open', '', 'Room'],
    ...['Ambience Medium', 'Ambience', 'Backbone', 'Big Room', 'Bright Room', 'Concrete Chamber', 'Corridor',
        'Dark Medium Room', 'Dark Small Room', 'Drums Room', 'Garage', 'Guitar Room', 'High Verb', 'Large Chamber',
        'Living Room', 'Long Ambience', 'Medium Room', 'Office'].map(n => [3, 'none', 'preset', n + '.adv'])
];
document.getElementById('files').innerHTML = files.map(([lvl, tw, icon, name]) =>
    `<li class="l${lvl}${name.startsWith('Dark Small') ? ' sel' : ''}"><i class="tw ${tw}"></i>` +
    (icon ? `<svg><use href="#i-${icon}"/></svg>` : '') + name.replace('&', '&amp;') + '</li>').join('');

// ---- song overview, one 3px stripe per track
const stripes = [
    ['#4aff9a', [295, 885], [1179, 1914]],
    ['#5c5fff', [0, 1914]],
    ['#69ff72', [146, 1914]],
    ['#4aff9a', [589, 885], [1031, 1914]],
    ['#c09213', [589, 885], [1031, 1914]],
    ['#c09213', [737, 885], [1179, 1914]],
    ['#50ff00', [0, 422], [443, 885], [1327, 1914]],
    ['#ff9325', [405, 478], [552, 626], [737, 771], [847, 920], [1289, 1362], [1473, 1510], [1585, 1656], [1730, 1804], [1879, 1953]]
];
let ov = '';
stripes.forEach(([color, ...parts], i) => parts.forEach(([a, b]) => ov += rect(a, i * 3, b - a, 3, `fill="${color}"`)));
for (let i = 0; i < 52; i++) {
    if (i % 4) ov += rect(Math.round(i * 36.8), 0, 1, 3, 'opacity=".5"') + rect(Math.round(i * 36.8), 18, 1, 3, 'opacity=".5"');
}
[443, 771, 885, 1179, 1327, 1621, 1769].forEach(p => ov += rect(p, 0, 2, 24, 'opacity=".75"'));
document.getElementById('overview').innerHTML = `<svg>${ov}</svg><div class="overview-box"></div>`;

// ---- lane background: 16-bar shading and a line every two bars
function laneBg() {
    let s = rect(0, 0, x(17), 104, 'opacity=".09"');
    [33, 65, 97].forEach(b => s += rect(x(b), 0, x(b + 16) - x(b), 104, 'opacity=".09"'));
    for (let b = 11; b < 120; b += 2) s += rect(x(b), 0, 2, 104, 'fill="#3f5454" opacity=".7"');
    return `<svg class="lane-bg" preserveAspectRatio="none">${s}</svg>`;
}

// ---- clip contents
const draw = {
    kick(w) {
        let s = '';
        for (let i = 1; i < w; i += 6) s += rect(i, 62, 2, 6);
        return s;
    },
    kickEnd(w) {
        let s = draw.kick(w - 94);
        for (let i = 98; i < 146; i += 6) s += rect(i, 62, 5, 6);
        return s + rect(144, 62, 28, 6);
    },
    beat(w) {
        let s = '';
        for (let i = 2, n = 0; i < w; i += 6, n++) {
            s += rect(i, 2, 2, 6) + rect(i, 26, 2, 6) + rect(i, 62, 2, 6);
            if (n % 2) s += rect(i + 3, 50, n % 8 === 7 ? 6 : 2, 6);
            if (n % 8 === 2) s += rect(i + 1, rnd() > .5 ? 50 : 56, 2, 10) + rect(i + 5, 56, 2, 6);
        }
        return s;
    },
    piano(w) {
        let s = '';
        for (let i = 2; i < w - 18;) {
            const d = 2 + Math.floor(rnd() * 2) * 2;
            [14, 20, 28, 44, 58].forEach(y => s += rect(i, y, d, 2));
            i += d + 2 + (rnd() > .85 ? 3 : 0);
        }
        [10, 16, 24, 40, 54].forEach(y => s += rect(w - 11, y, 6, 2) + rect(w - 3, y, 2, 2));
        return s;
    },
    house(w) {
        let s = rect(w - 9, 4, 5, 14) + rect(w - 4, 20, 5, 14);
        for (let i = 2, n = 0; i < w - 14; n++) {
            const count = n % 2 ? 4 : 3;
            for (let k = 0; k < count && i < w - 12; k++, i += 5) s += rect(i, 52, rnd() > .85 ? 3 : 2, 14);
            i += 7;
        }
        return s;
    },
    strings(w) {
        return rect(1, 24, 96, 20) + rect(99, 24, w - 100, 20);
    },
    wave(w, mid, amp, body, noise = 0) {
        const up = [], down = [];
        for (let i = 0; i <= w; i += 2) {
            const a = Math.max(1, Math.round(body(i) * amp * (1 - noise * rnd())));
            up.push(`${i},${mid - a}`);
            down.unshift(`${i},${mid + a}`);
        }
        return `<polygon points="${up.concat(down).join(' ')}"/>`;
    },
    // one burst every two bars, dying away just before the next
    burst: (i, low) => {
        const p = (i % 49) / 49;
        if (p < .05) return .3;
        if (p > .84) return Math.max(.1, (1 - p) * 5 * low);
        return low + (1 - low) * Math.abs(Math.cos(p * 22));
    },
    guitar(w) { return draw.wave(w, 35, 12, i => draw.burst(i, .7), .2); },
    guitarHi(w) { return draw.wave(w, 35, 9, i => draw.burst(i, .5), .2); },
    shaker(w) { return draw.wave(w, 35, 16, i => (i % 8 === 4 ? 1 : .55), .45); },
    riser(w) {
        return [17, 53].map(m => draw.wave(w, m, 12, i => Math.pow(i / w, 2.2))).join('') +
            '<path opacity=".18" d="M0 0h5L2 70H0z"/>' + `<path opacity=".18" d="M${w - 8} 0h8v70h-3z"/>`;
    },
    sweep(w) {
        return [17, 53].map(m => draw.wave(w, m, 11, i => i < 8 ? .7 + i / 30 : Math.pow(Math.max(0, 1 - (i - 8) / 26), 1.5))).join('') +
            `<path opacity=".18" d="M${w - 8} 0h8v70h-4z"/>`;
    }
};

function clip([from, to, title, kind, marks = [], picked], line, grid) {
    const left = x(from), w = x(to) - left;
    let lines = '';
    for (let b = 11; b < to; b += 2) if (b > from) lines += rect(x(b) - left - 1, 0, 2, 70, `fill="${grid}"`);
    const ticks = marks.map(b => `<i class="mark" style="left:${x(b) - left}px"></i>`).join('') +
        (kind.startsWith('guitar') ? marks.map(b => `<i class="mark low" style="left:${x(b) - left}px"></i>`).join('') : '');
    return `<div class="clip${picked ? ' picked' : ''}" style="left:${left}px;width:${w}px"><header>${title}</header>` +
        `<svg width="${w}" height="70" fill="#0d1412">${lines}${draw[kind](w)}</svg>${ticks}</div>`;
}

const eight = (title, kind) => [9, 17, 25, 33, 41, 49, 57, 65, 73].map(b => [b, b + 8, (b < 17 ? '... ' : '') + title, kind]);
const sweeps = [23, 31, 47, 71].flatMap(b => [[b, b + 2, 'Rise', 'riser'], [b + 2, b + 4, 'Sweep', 'sweep']]);

const tracks = [
    { name: '1 Coral Kit', color: '#48c4ff', clipColor: '#4aff9a', line: '#26985f', grid: '#2fc47c', vol: '0', to: 83, pan: 'C', sends: ['-inf', '-inf'], midi: true, meter: '88,91,92;88,91,92',
        clips: [[17, 25, '909 Core Kit Disco 1', 'kick'], [25, 33, '909 Core Kit Disco 1', 'beat'], [33, 41, '909 Core Kit Disco 1', 'beat'], [41, 49, '909 Core Kit Disco 1', 'beat', [], true], [65, 73, '909 Core Kit Disco 1', 'kickEnd'], [73, 81, '909 Core Kit Disco 1', 'beat']] },
    { name: '2 E-Piano Str', color: '#e7ff66', clipColor: '#5c5fff', line: '#3a34e6', grid: '#453fff', vol: '0', to: 83, pan: 'C', sends: ['-inf', '-13.0'], midi: true, meter: '49,59,60;49,57,80', clips: eight('Rhythmic Piano E M', 'piano') },
    { name: '3 Basic FM Ho', color: '#69ff72', clipColor: '#69ff72', line: '#33d845', grid: '#43f552', vol: '0', to: 83, pan: 'C', sends: ['-7.0', '-inf'], midi: true, meter: '36,36,38;34,34,72', clips: eight('3-Basic FM House Ba', 'house') },
    { name: '4 Synthetic C', color: '#4aff9a', clipColor: '#4aff9a', line: '#26985f', grid: '#2fc47c', vol: '-5.3', to: 71, pan: '1R', sends: ['-inf', '-3.0'], midi: true, meter: '38,45,47;38,44,46',
        clips: [[33, 41, 'Hi String', 'strings', [37]], [41, 49, 'Hi String', 'strings', [45]], [57, 65, 'Hi String', 'strings', [61]], [65, 73, 'Hi String', 'strings', [69]], [73, 81, 'Hi String', 'strings', [77]]] },
    { name: 'Guitar Riff', num: 5, color: '#c09213', clipColor: '#c09213', line: '#7a5c0b', grid: '#8f6c0e', vol: '-1.6', to: 81, pan: '35L', panFrom: 16, panTo: 50, sends: ['-6.0', '-inf'], meter: '45,45,73;27,27,52',
        clips: [[57, 65, 'Guitar Riff Lo', 'guitar', [59, 61, 63]], [65, 73, 'Guitar Riff Lo', 'guitar', [67, 69, 71]], [73, 81, 'Guitar Riff Lo', 'guitar', [75]]] },
    { name: '6 Guitar Riff', color: '#f7ff2e', clipColor: '#c09213', line: '#7a5c0b', grid: '#8f6c0e', vol: '-6.8', to: 68, pan: '35R', panFrom: 50, panTo: 84, off: true, sends: ['-6.0', '-inf'], meter: '21,21,38;36,36,58',
        clips: [[65, 73, 'Guitar Riff Hi', 'guitarHi', [67, 69, 71]], [73, 81, 'Guitar Riff Hi', 'guitarHi', [75]]] },
    { name: 'Shaker', num: 7, color: '#50ff00', clipColor: '#50ff00', line: '#37a808', grid: '#3cc404', vol: '-2.0', to: 79, pan: 'C', sends: ['-inf', '-inf'], meter: '42,68,69;42,68,69', clips: [[73, 81, 'Shaker 2', 'shaker', [75]]] },
    { name: '8 Sweep Whit', color: '#ff9325', clipColor: '#ff9325', line: '#a35a10', grid: 'none', vol: '-7.2', to: 65, pan: 'C', off: true, sends: ['-inf', '-2.5'], meter: '31,39,41;32,40,45', clips: [...sweeps, [41, 43, 'Sweep', 'sweep']] }
];

const meter = data => data.split(';').map(ch => {
    const [l, h, p] = ch.split(',');
    return `<i style="--level:${l}%;--hold:${h}%;--peak:${p}%"></i>`;
}).join('');
const val = (label, v, cls, to = 0, from = 0) =>
    `<input class="val ${cls}" aria-label="${label}" value="${v}" style="--from:${from}%;--to:${to}%">`;
const sendFill = { '-inf': 0, '-13.0': 68, '-7.0': 80, '-3.0': 93, '-6.0': 84, '-2.5': 93 };
const fold = (down, ink) => `<svg viewBox="0 0 28 28"><circle cx="13" cy="13" r="12" fill="none" stroke="${ink}" stroke-width="2"/>` +
    `<path fill="${ink}" d="${down ? 'M7 9h12l-6 9z' : 'M10 7v12l9-6z'}"/></svg>`;

let html = tracks.map((t, i) => {
    const n = t.num || i + 1;
    const arm = t.midi
        ? '<svg width="18" height="18"><circle cx="9" cy="9" r="7"/><path d="M9 3h3v7a3 3 0 1 1-3-3z" fill="#a9bab9"/></svg>'
        : '<svg width="18" height="18"><circle cx="9" cy="9" r="7"/></svg>';
    return `<div class="track">
        <div class="lane" style="--color:${t.clipColor};--line:${t.line}">${laneBg()}${t.clips.map(c => clip(c, t.line, t.grid)).join('')}</div>
        <div class="clip-name" style="--color:${t.color}">${fold(true, 'rgba(0,0,0,.75)')}<span>${t.name}</span></div>
        <div class="panel io">
            <button class="btn">In</button><button class="btn ${t.off ? '' : 'on'}">Auto</button><button class="btn ${t.off ? 'on' : ''}">Off</button>
            <span class="pick"><select aria-label="Output ${n}"><option>Master</option></select></span><div class="empty"></div>
        </div>
        <div class="panel mixer">
            <div class="mixer-rows">
                <div class="mixer-row"><button class="btn on num">${n}</button><button class="btn s">S</button><button class="btn s" aria-label="Arm ${n}">${arm}</button></div>
                <div class="mixer-row">${val('Volume ' + n, t.vol, 'half', t.to)}${val('Pan ' + n, t.pan, 'half', t.panTo, t.panFrom)}</div>
                <div class="mixer-row">${t.sends.map((s, k) => val('Send ' + 'AB'[k] + ' ' + n, s, 'send', sendFill[s])).join('')}</div>
            </div>
            <div class="meter">${meter(t.meter)}</div>
        </div>
    </div>`;
}).join('');

html += `<div class="track drop"><div class="lane">${laneBg()}<span>Drop Files and Devices Here</span></div><div class="panel"></div></div>`;

html += [['A', 'Dark Small', '#4a7fff', '30,30,52;30,30,50'], ['B', 'Microfuse', '#86a9ff', '45,50,56;45,50,56']].map(([id, name, color, m]) =>
    `<div class="track short ${id === 'B' ? 'lit' : ''}"><div class="lane">${laneBg()}</div>
        <div class="clip-name" style="--color:${color}">${fold(false, '#0e2050')}<span>${id} ${name}</span></div>
        <div class="panel io"><div class="empty"></div></div>
        <div class="panel mixer"><div class="mixer-rows"><div class="mixer-row"><button class="btn on num">${id}</button><button class="btn s">S</button><button class="btn on post">Post</button></div></div>
        <div class="meter">${meter(m)}</div></div></div>`).join('');

html += `<div class="track short"><div class="lane">${laneBg()}<span class="grid-label">2/1</span></div>
    <div class="clip-name" style="--color:#2a93ff">${fold(false, '#0e2050')}<span>&nbsp;Master</span></div>
    <div class="panel io"><span class="pick"><select aria-label="Master output"><option>1/2</option></select><span class="meter">${meter('75,75,80;75,75,80')}</span></span></div>
    <div class="panel mixer"><div class="mixer-rows"><div class="mixer-row">${val('Master volume', '-5.3', 'half', 71)}${val('Preview volume', '0', 'half blue', 83)}</div></div>
    <div class="meter">${meter('70,75,80;70,75,80')}</div></div></div>`;
document.getElementById('tracks').innerHTML = html;

// ---- rulers, locators, cursors
const selMarks = `<i class="sel-mark" style="left:${x(41) - 6}px"></i><i class="sel-mark end" style="left:${x(49)}px"></i>`;
let ruler = laneBg();
for (let b = 11; b < 120; b += 2) {
    const long = b % 4 === 1;
    ruler += `<i class="tick${long ? ' long' : ''}" style="left:${x(b)}px"></i>`;
    if (long) ruler += `<span class="num" style="left:${x(b)}px">${b}</span>`;
}
ruler += '<div class="loop-brace"><svg width="18" height="18"><path d="M17 0L1 9l16 9" fill="none" stroke="#000" stroke-width="2"/></svg></div>';
[[25, '2 BEATS'], [49, '3 DROP'], [65, '4 BUILD'], [73, '5 OUTRO']].forEach(([b, name]) => ruler +=
    `<div class="locator" style="left:${x(b)}px"><svg width="20" height="22"><path d="M1 1l17 10L1 21z" fill="#b4c4c2" stroke="#000" stroke-width="2"/></svg><span>${name}</span></div>`);
document.getElementById('ruler').innerHTML = ruler + selMarks;

let times = '';
for (let i = -2; i < 40; i++) {
    const left = 167 + i * 64, sec = 30 + (i / 3) * 15;
    times += `<i class="${i % 3 ? '' : 'long'}" style="left:${left}px"></i>`;
    if (i % 3 === 0) times += `<span style="left:${left}px">${Math.floor(sec / 60)}:${String(sec % 60).padStart(2, '0')}</span>`;
}
document.getElementById('time-ruler').innerHTML = times + selMarks;
document.getElementById('cursors').innerHTML = [25, 49, 65, 73].map(b => `<i style="left:${x(b)}px"></i>`).join('') +
    `<i class="play" style="left:${x(43.1)}px"></i>`;

document.querySelectorAll('[data-levels]').forEach(el => el.innerHTML = meter(el.dataset.levels));

// ---- clip miniature in the status bar
const notes = [[0, 14], [0, 26], [25, 6], [50, 14], [50, 22], [50, 26], [75, 6], [100, 14], [100, 26], [126, 6], [142, 24], [150, 14], [150, 22], [150, 26],
    [175, 6], [176, 24], [200, 14], [200, 26], [225, 6], [250, 14], [250, 22], [250, 26], [276, 6], [300, 14], [300, 26], [326, 6], [350, 14], [350, 22], [350, 26], [374, 22], [376, 6], [388, 22]];
document.getElementById('clip-map').innerHTML = rect(250, 2, 6, 28, 'fill="#99cad2"') + notes.map(([a, b]) => rect(a, b, 6, 2)).join('') + rect(14, 0, 2, 32);

// ---- plug-in knobs
document.querySelectorAll('.knob').forEach(el => {
    const big = el.classList.contains('large');
    const size = big ? 146 : 100, c = size / 2, r = big ? 74 : 47, k = big ? 45 : 31;
    const [a, b, d, e] = el.dataset.hand.split(',').map(Number);
    const ring = (n, color) => `<circle cx="${c}" cy="${c}" r="${r}" fill="none" stroke="${color}" stroke-width="4" pathLength="360" stroke-dasharray="${n} 400" transform="rotate(119 ${c} ${c})"/>`;
    const mark = el.dataset.mark ? `<path d="M${c} ${c - r - 2}v4" stroke="#7e9392" stroke-width="4" transform="rotate(${el.dataset.mark} ${c} ${c})"/>` : '';
    el.innerHTML = `<label><input type="range" aria-label="${el.dataset.name}"><svg width="${size}" height="${size}">
        <defs><radialGradient id="sh-${size}"><stop offset=".6" stop-color="#1c2526"/><stop offset="1" stop-color="#1c2526" stop-opacity="0"/></radialGradient></defs>
        ${ring(302, '#283334')}${ring(el.dataset.arc, '#65ffdc')}${mark}
        <circle cx="${c}" cy="${c + 9}" r="${k + 13}" fill="url(#sh-${size})"/>
        <circle cx="${c}" cy="${c}" r="${k}" fill="${big ? '#7e9392' : '#475859'}" stroke="${big ? '#94a6a5' : '#5b6d6e'}" stroke-width="2"/>
        <path d="M${c + a} ${c + b}L${c + d} ${c + e}" stroke="${big ? '#465758' : '#b4c2c1'}" stroke-width="3"/>
    </svg>${el.dataset.name}</label>`;
});
```
